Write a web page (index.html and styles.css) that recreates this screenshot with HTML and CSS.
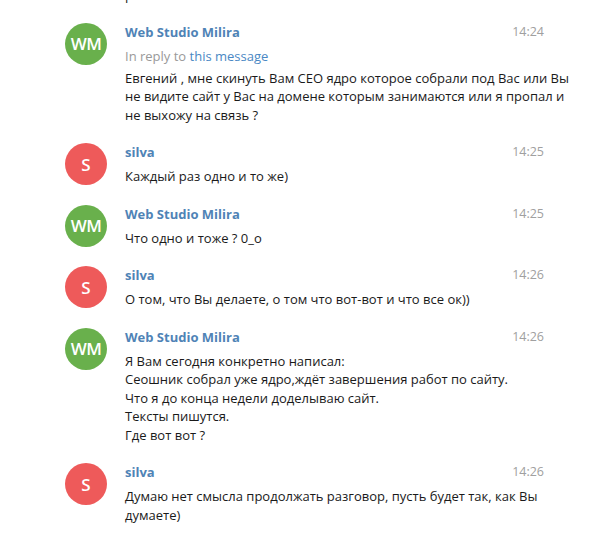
FILE: index.html
```html
<!DOCTYPE html>
<html lang="ru">
<head>
    <meta charset="UTF-8">
    <title>Chat</title>
    <link rel="stylesheet" href="styles.css">
</head>
<body>
    <div class="chat">
        <div class="tail">р</div>

        <div class="msg">
            <div class="avatar wm">WM</div>
            <div class="body">
                <div class="head"><span class="name">Web Studio Milira</span><span class="time">14:24</span></div>
                <div class="reply">In reply to <span class="link">this message</span></div>
                <div class="text">Евгений , мне скинуть Вам СЕО ядро которое собрали под Вас или Вы не видите сайт у Вас на домене которым занимаются или я пропал и не выхожу на связь ?</div>
            </div>
        </div>

        <div class="msg">
            <div class="avatar s">S</div>
            <div class="body">
                <div class="head"><span class="name">silva</span><span class="time">14:25</span></div>
                <div class="text">Каждый раз одно и то же)</div>
            </div>
        </div>

        <div class="msg">
            <div class="avatar wm">WM</div>
            <div class="body">
                <div class="head"><span class="name">Web Studio Milira</span><span class="time">14:25</span></div>
                <div class="text">Что одно и тоже ? 0_о</div>
            </div>
        </div>

        <div class="msg">
            <div class="avatar s">S</div>
            <div class="body">
                <div class="head"><span class="name">silva</span><span class="time">14:26</span></div>
                <div class="text">О том, что Вы делаете, о том что вот-вот и что все ок))</div>
            </div>
        </div>

        <div class="msg">
            <div class="avatar wm">WM</div>
            <div class="body">
                <div class="head"><span class="name">Web Studio Milira</span><span class="time">14:26</span></div>
                <div class="text">Я Вам сегодня конкретно написал:<br>Сеошник собрал уже ядро,ждёт завершения работ по сайту.<br>Что я до конца недели доделываю сайт.<br>Тексты пишутся.<br>Где вот вот ?</div>
            </div>
        </div>

        <div class="msg">
            <div class="avatar s">S</div>
            <div class="body">
                <div class="head"><span class="name">silva</span><span class="time">14:26</span></div>
                <div class="text">Думаю нет смысла продолжать разговор, пусть будет так, как Вы думаете)</div>
            </div>
        </div>
    </div>
</body>
</html>
```

FILE: styles.css
```css
body {
    margin: 0;
    background: #fff;
    font-family: "Open Sans", "DejaVu Sans", sans-serif;
    font-size: 13px;
    color: #1a1a1a;
    overflow: hidden;
}

.chat {
    display: flex;
    flex-direction: column;
    gap: 19px;
    padding: 0 49px 0 65px;
    margin-top: -14px;
}

.tail {
    padding-left: 60px;
    line-height: 18.5px;
    margin-bottom: -1px;
}

.msg {
    display: flex;
    gap: 18px;
}

.avatar {
    width: 42px;
    height: 42px;
    flex: none;
    border-radius: 50%;
    color: #fff;
    font-size: 17px;
    font-weight: 600;
    display: flex;
    align-items: center;
    justify-content: center;
}

.avatar.wm {
    background: #69b04c;
    letter-spacing: -0.5px;
}

.avatar.s {
    background: #ee5a5a;
}

.body {
    flex: 1;
}

.head {
    display: flex;
    justify-content: space-between;
    line-height: 18px;
    margin-bottom: 6px;
}

.name {
    color: #4f83b6;
    font-weight: 700;
}

.time {
    color: #a0a0a0;
    font-size: 12.5px;
}

.reply {
    color: #999;
    line-height: 18px;
    margin-bottom: 4px;
}

.link {
    color: #4a88c4;
}

.text {
    line-height: 18.5px;
    margin-right: -30px;
}
```
